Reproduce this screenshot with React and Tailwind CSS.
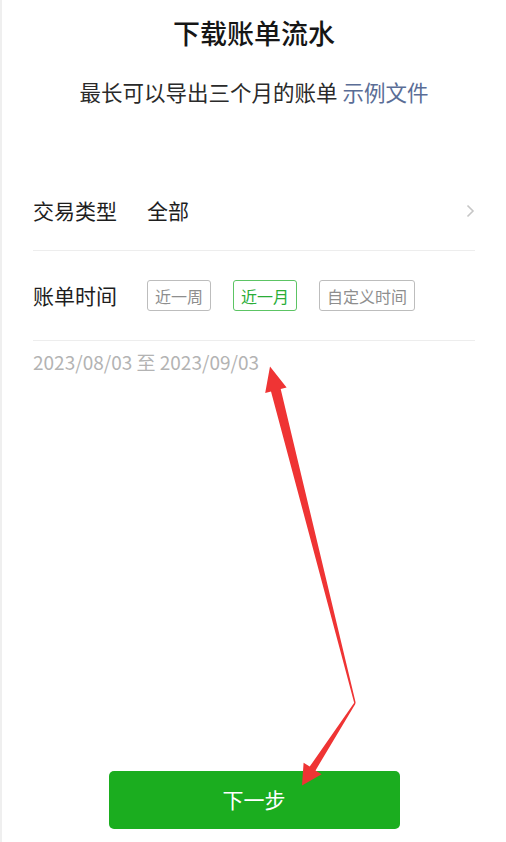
import React from "react";

const font = { fontFamily: '"Noto Sans CJK SC", "Noto Sans", sans-serif' };

function Chip({ children, active }) {
  return (
    <div
      className={
        "h-[31px] px-[7px] flex items-center rounded-[3px] border text-[16px] leading-none " +
        (active ? "border-[#5cc464] text-[#2aad37]" : "border-[#bdbdbd] text-[#8e8e8e]")
      }
    >
      {children}
    </div>
  );
}

export default function App() {
  return (
    <div className="relative w-[506px] h-[842px] bg-white border-l-2 border-[#efefef] overflow-hidden" style={font}>
      <div className="pt-[16px] text-center text-[27px] leading-[34px] font-medium text-[#161616]">下载账单流水</div>
      <div className="mt-[28px] text-center text-[21.5px] leading-[28px] text-[#2a2a2a]">
        最长可以导出三个月的账单 <span className="text-[#5a6d96]">示例文件</span>
      </div>

      <div className="mt-[66px] mx-[31px]">
        <div className="h-[79px] flex items-center border-b border-[#ededed]">
          <div className="text-[21px] text-[#1e1e1e] w-[114px]">交易类型</div>
          <div className="text-[21px] text-[#1e1e1e]">全部</div>
          <div className="ml-auto mr-0">
            <svg width="9" height="14" viewBox="0 0 9 14">
              <polyline points="1.5,1.5 7,7 1.5,12.5" fill="none" stroke="#c6c6c6" strokeWidth="1.6" />
            </svg>
          </div>
        </div>
        <div className="h-[90px] flex items-center border-b border-[#ededed]">
          <div className="text-[21px] text-[#1e1e1e] w-[114px]">账单时间</div>
          <div className="flex gap-[22px]">
            <Chip>近一周</Chip>
            <Chip active>近一月</Chip>
            <Chip>自定义时间</Chip>
          </div>
        </div>
        <div className="pt-[9px] text-[19px] leading-[24px] text-[#b3b3b3]">2023/08/03 至 2023/09/03</div>
      </div>

      <div className="mt-[397px] mx-auto w-[291px] h-[58px] rounded-[5px] bg-[#1bad1f] flex items-center justify-center text-white text-[21px]">
        下一步
      </div>

      <svg className="absolute left-0 top-0 pointer-events-none" width="506" height="842" viewBox="0 0 506 842">
        <polygon
          fill="#ef3434"
          points="353.7,702.8 278.7,389.1 284.6,387.6 268,366.5 263.2,393 269,391.5 352.3,703.2"
        />
        <polygon
          fill="#ef3434"
          points="352.4,702.6 307.7,766.6 301.6,762.7 300,785.5 319.6,774.3 313.5,770.4 353.6,703.4"
        />
      </svg>
    </div>
  );
}
